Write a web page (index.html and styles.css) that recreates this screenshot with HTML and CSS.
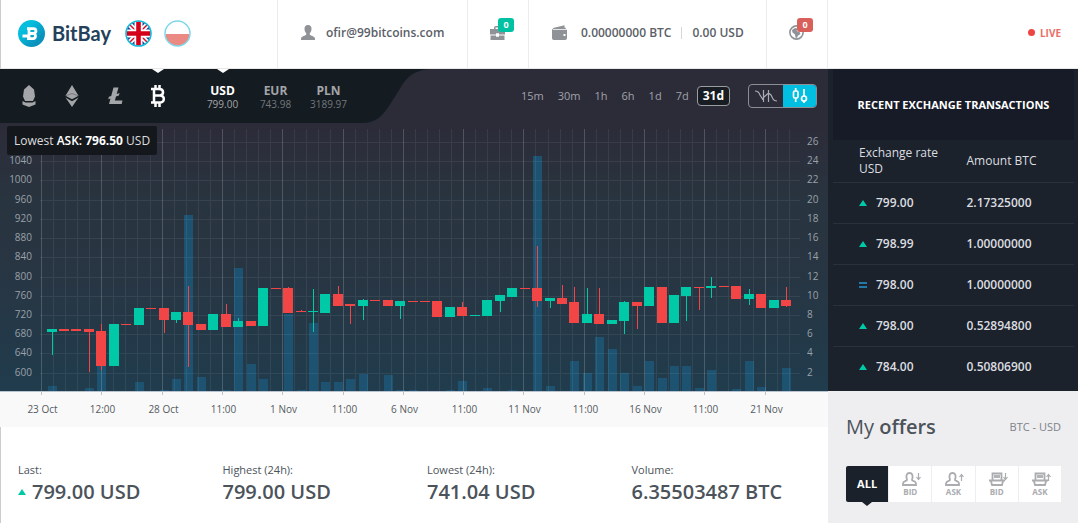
FILE: index.html
```html
<!DOCTYPE html>
<html lang="en">
<head>
<meta charset="utf-8">
<meta name="viewport" content="width=device-width, initial-scale=1">
<title>BitBay</title>
<link rel="stylesheet" href="styles.css">
</head>
<body>
<header class="topbar">
  <div class="brand">
    <a class="logo" href="#">
      <svg width="27" height="27" viewBox="0 0 27 27" aria-hidden="true">
        <defs><linearGradient id="lg" x1="0" y1="0" x2="1" y2="1"><stop offset="0.3" stop-color="#05bede"/><stop offset="0.75" stop-color="#0a92bd"/></linearGradient></defs>
        <circle cx="13.500" cy="13.500" r="13.500" fill="url(#lg)"/>
        <path d="M9 8.600h6.500a2.200 2.200 0 0 1 0 4.900h-5M15.500 13.500a2.700 2.700 0 0 1 0 5.200H9M11 7.500v12M4.500 16h7" fill="none" stroke="#fff" stroke-width="2.800"/>
      </svg>
      <span>BitBay</span>
    </a>
    <button class="flag" type="button" aria-label="English">
      <svg width="27" height="27" viewBox="0 0 27 27">
        <clipPath id="fc"><circle cx="13.500" cy="13.500" r="12"/></clipPath>
        <g clip-path="url(#fc)">
          <path fill="#29418a" d="M0 0h27v27H0z"/>
          <path d="M0 0l27 27M27 0L0 27" stroke="#fff" stroke-width="5"/>
          <path d="M0 0l27 27M27 0L0 27" stroke="#d4102a" stroke-width="1.500"/>
          <path d="M13.500 0v27M0 13.500h27" stroke="#fff" stroke-width="8"/>
          <path d="M13.500 0v27M0 13.500h27" stroke="#d4001a" stroke-width="4.600"/>
        </g>
        <circle cx="13.500" cy="13.500" r="12.500" fill="none" stroke="#19b9da" stroke-width="1.600"/>
      </svg>
    </button>
    <button class="flag" type="button" aria-label="Polski">
      <svg width="27" height="27" viewBox="0 0 27 27">
        <path d="M1.500 14a12 12 0 0 0 24 0z" fill="#ea8a82"/>
        <circle cx="13.500" cy="13.500" r="12.500" fill="none" stroke="#7fd7e8" stroke-width="1.500"/>
      </svg>
    </button>
  </div>
  <a class="cell account" href="#">
    <svg width="14" height="15" viewBox="0 0 14 15" fill="#8f9296" aria-hidden="true"><path d="M7 0c2.500 0 3.700 1.700 3.500 4.200-.1 1.800-.8 3-1.700 3.900v1.700c.4.900 4.700 1.200 5.200 3.700V15H0v-1.500c.5-2.500 4.800-2.800 5.200-3.700V8.100C4.300 7.200 3.600 6 3.500 4.200 3.300 1.700 4.500 0 7 0z"/></svg>
    <span>ofir@99bitcoins.com</span>
  </a>
  <a class="cell orders" href="#" aria-label="Open orders">
    <svg width="15" height="14" viewBox="0 0 15 14" fill="#8f9296" aria-hidden="true"><path d="M4 3V2c0-1.300.6-2 2-2h3c1.400 0 2 .7 2 2v1h4v5.500H9V7.300H6v1.200H0V3zm1.500 0h4V1.500h-4zM.5 9.600h5.500v1.200h3V9.600h5.500V14H.5z"/></svg>
    <span class="badge">0</span>
  </a>
  <a class="cell wallet" href="#">
    <svg width="15" height="15" viewBox="0 0 15 15" fill="#8f9296" aria-hidden="true"><path d="M1 3L12.500.2v2.300l1.300.5V4H1.200z"/><path fill-rule="evenodd" d="M0 3.200c.3 1 1 1.500 2 1.500h13V13c0 1.300-.7 2-2 2H2c-1.400 0-2-.8-2-2zM11.500 9v2h2V9z"/></svg>
    <span>0.00000000 BTC</span><i></i><span>0.00 USD</span>
  </a>
  <a class="cell alerts" href="#" aria-label="Notifications">
    <svg width="15" height="15" viewBox="0 0 15 15" aria-hidden="true"><circle cx="7.500" cy="7.500" r="6.600" fill="none" stroke="#8f9296" stroke-width="1.600"/><path d="M3 5l3-2 3 .5L7.500 6l3 1 1 2-2.500 1.500L8 13l-1.500-.5L6 9.500 3.500 7.500z" fill="#8f9296"/></svg>
    <span class="badge badge-red">0</span>
  </a>
  <div class="live"><b></b>LIVE</div>
</header>

<div class="layout">
  <main class="market">
    <section class="chart">
      <div class="toolbar">
        <nav class="pairs" aria-label="Market">
          <button class="coin" type="button" aria-label="Lisk"><svg width="14" height="22" viewBox="0 0 14 22"><path fill="#a3a5a8" d="M7 0l5 4.500 1 7-2 4.500H3L1 11.500l1-7zM.5 16l3 1.500h7l3-1.500v3.500L7 22 .5 19.500z"/></svg></button>
          <button class="coin" type="button" aria-label="Ethereum"><svg width="14" height="22" viewBox="0 0 14 22"><path fill="#a3a5a8" d="M7 0l6.500 10.800L7 14.300.5 10.800zM.5 12.600L7 16.200l6.500-3.600L7 22z"/><path d="M1 10.700L7 8.500l6 2.200" stroke="#777b80" fill="none"/></svg></button>
          <button class="coin" type="button" aria-label="Litecoin"><svg width="16" height="22" viewBox="0 0 16 22"><path fill="#a3a5a8" d="M6.500 2.500h5L9.700 9l2.800-1-.6 2.400-2.900 1-1.100 4.100h7.600l-.8 3.500H2l1.500-5.600-2.200.8.600-2.400 2.300-.8z"/></svg></button>
          <button class="coin active" type="button" aria-label="Bitcoin"><svg width="16" height="22" viewBox="0 0 16 22"><path d="M1 4h8c5.500 0 5 6 1 6.600M4 4v13.500M4 10.600h6c5.300.5 5 7-.5 7H1M5.500 0v4M9.500 0v4M5.500 17.500V22M9.500 17.500V22" fill="none" stroke="#fff" stroke-width="2.500"/></svg></button>
          <button class="quote active" type="button"><strong>USD</strong><span>799.00</span></button>
          <button class="quote" type="button"><strong>EUR</strong><span>743.98</span></button>
          <button class="quote" type="button"><strong>PLN</strong><span>3189.97</span></button>
        </nav>
        <svg class="tail" width="70" height="54" viewBox="0 0 70 54" aria-hidden="true"><path d="M0 0H70C52 1 46 7 39 18L29 34C21 47 14 54 0 54z" fill="#151c21"/></svg>
        <div class="ranges">
          <button type="button">15m</button><button type="button">30m</button><button type="button">1h</button><button type="button">6h</button><button type="button">1d</button><button type="button">7d</button><button type="button" class="active">31d</button>
        </div>
        <div class="modes">
          <button type="button" aria-label="Line chart"><svg width="22" height="14" viewBox="0 0 22 14" fill="none" stroke="#a9abb2" stroke-width="1.200"><path d="M0 2c3 0 4 1 5 4l2.500 4L9 8l4.500-4L16 6l2 4c1 2 2 2 4 2M8.500 1v12M13.500 1v12"/></svg></button>
          <button type="button" class="active" aria-label="Candlestick chart"><svg width="16" height="16" viewBox="0 0 16 16" fill="none" stroke="#fff" stroke-width="1.700"><rect x="1.500" y="3" width="4.500" height="7" rx="1.500"/><path d="M3.700 0v3M3.700 10v4M12 1v7M12 13v2"/><circle cx="12" cy="10.500" r="2.500"/></svg></button>
        </div>
      </div>
      <svg class="plot" id="plot" viewBox="0 123 828 304" role="img" aria-label="BTC to USD price and volume"></svg>
      <div class="tip">Lowest <b class="tip-side">ASK:</b> <b>796.50</b> USD</div>
    </section>
    <section class="stats">
      <div><h3>Last:</h3><p><i class="up"></i>799.00 USD</p></div>
      <div><h3>Highest (24h):</h3><p>799.00 USD</p></div>
      <div><h3>Lowest (24h):</h3><p>741.04 USD</p></div>
      <div><h3>Volume:</h3><p>6.35503487 BTC</p></div>
    </section>
  </main>

  <aside class="side">
    <section class="recent">
      <h2>RECENT EXCHANGE TRANSACTIONS</h2>
      <table>
        <thead><tr><th>Exchange rate USD</th><th>Amount BTC</th></tr></thead>
        <tbody>
          <tr><td><i class="up"></i>799.00</td><td>2.17325000</td></tr>
          <tr><td><i class="up"></i>798.99</td><td>1.00000000</td></tr>
          <tr><td><i class="same"></i>798.00</td><td>1.00000000</td></tr>
          <tr><td><i class="up"></i>798.00</td><td>0.52894800</td></tr>
          <tr><td><i class="up"></i>784.00</td><td>0.50806900</td></tr>
        </tbody>
      </table>
    </section>
    <section class="offers">
      <div class="offers-head"><h2>My <b>offers</b></h2><span>BTC - USD</span></div>
      <svg class="defs" width="0" height="0" aria-hidden="true">
        <defs>
          <g id="person" fill="none" stroke="#aaacaf" stroke-width="1.800"><path d="M5 8C3.500 3 5 1 7.500 1S11.500 3 10 8c0 1 4 1 4 3.500V13H1v-1.500C1 9 5 9 5 8z"/></g>
          <g id="shop" fill="none" stroke="#aaacaf" stroke-width="1.800"><path d="M3.500 8V1.500h9V8M0 8.500h16M2 9l1 4h10l1-4M6 3v3M8 3v3M10 3v3"/></g>
          <path id="down" d="M16.500 1v6M14.500 5l2 2.500 2-2.500" fill="none" stroke="#aaacaf" stroke-width="1.200"/>
          <path id="rise" d="M16.500 9V2.500M14.500 5l2-2.500 2 2.500" fill="none" stroke="#aaacaf" stroke-width="1.200"/>
        </defs>
      </svg>
      <div class="tabs">
        <button type="button" class="active">ALL</button>
        <button type="button"><svg width="19" height="14" viewBox="0 0 19 14"><use href="#person"/><use href="#down"/></svg>BID</button>
        <button type="button"><svg width="19" height="14" viewBox="0 0 19 14"><use href="#person"/><use href="#rise"/></svg>ASK</button>
        <button type="button"><svg width="19" height="14" viewBox="0 0 19 14"><use href="#shop"/><use href="#down"/></svg>BID</button>
        <button type="button"><svg width="19" height="14" viewBox="0 0 19 14"><use href="#shop"/><use href="#rise"/></svg>ASK</button>
      </div>
    </section>
  </aside>
</div>
<script src="chart.js"></script>
</body>
</html>
```

FILE: styles.css
```css
* { box-sizing: border-box; }
body { margin: 0; min-height: 100vh; display: flex; flex-direction: column; background: #fff; color: #4c535b; font: 12px/16px "Open Sans", "Noto Sans", sans-serif; }
button { margin: 0; padding: 0; border: 0; background: none; color: inherit; font: inherit; cursor: pointer; }
a { color: inherit; text-decoration: none; }
h2, h3, p { margin: 0; }
svg { display: block; flex: none; }

.topbar { display: flex; height: 69px; border-left: 1px solid #ccc; border-bottom: 1px solid #e8e8e8; font-weight: 600; color: #5b6067; }
.brand { display: flex; align-items: center; width: 276px; padding-left: 17px; gap: 12px; padding-bottom: 2px; }
.logo { display: flex; align-items: center; gap: 7px; color: #24415b; font: 700 20px/24px Lato, "Open Sans", sans-serif; }
.logo span { width: 61px; }
.cell { display: flex; align-items: center; position: relative; border-left: 1px solid #ececec; padding-bottom: 3px; }
.account { width: 190px; padding-left: 23px; gap: 11px; }
.orders { width: 61px; padding-left: 22px; }
.wallet { width: 238px; padding-left: 23px; gap: 14px; }
.wallet i { width: 1px; height: 12px; margin: 0 -4px; background: #d3d8da; }
.alerts { width: 62px; padding-left: 22px; border-right: 1px solid #ececec; }
.badge { position: absolute; left: 30px; top: 18px; width: 16px; height: 14px; border-radius: 3px; background: #00c2a2; color: #fff; font: 700 9px/14px "Open Sans", sans-serif; text-align: center; }
.badge-red { background: #d9605a; }
.live { display: flex; align-items: center; gap: 5px; margin-left: auto; padding: 0 17px 3px 0; color: #ea6f68; font-size: 10px; font-weight: 700; }
.live b { width: 7px; height: 7px; border-radius: 50%; background: #ee4444; }

.layout { display: flex; flex: 1; }
.market { flex: 1; min-width: 0; }
.chart { position: relative; background: linear-gradient(#2c2c39 60px, #28343f 130px, #283542 200px, #203c4d 322px, #f9f9f9 322px); }
.toolbar { display: flex; height: 54px; align-items: center; padding-right: 11px; }
.pairs { display: flex; align-items: center; align-self: stretch; width: 362px; padding-left: 7px; background: #151c21; }
.pairs button { position: relative; display: flex; flex-direction: column; align-items: center; justify-content: center; align-self: stretch; }
.pairs .active::before { content: ""; position: absolute; top: 0; border: 6px solid transparent; border-top: 4px solid #fff; border-bottom: 0; }
.coin { width: 43px; }
.quote { width: 53px; color: #73777b; font-size: 10px; line-height: 12px; }
.coin + .quote { margin-left: 17px; }
.quote strong { color: #a3a5a8; font-size: 12px; line-height: 15px; }
.quote.active { color: #a3a5a8; }
.quote.active strong { color: #fff; }
.tail { align-self: stretch; }
.ranges { display: flex; align-items: center; gap: 14px; margin-left: auto; color: #a0a2aa; font-size: 11px; }
.ranges .active { height: 20px; margin-left: -6px; padding: 0 5px; border: 1px solid #9a9ea3; border-radius: 4px; background: #181d24; color: #fff; font-size: 12px; font-weight: 700; }
.modes { display: flex; width: 69px; height: 24px; margin-left: 18px; border: 1px solid #8b8e95; border-radius: 4px; overflow: hidden; }
.modes button { flex: 1; display: grid; place-items: center; }
.modes .active { background: #00bfe0; margin: -1px; }
.plot { width: 100%; height: auto; }
.tip { position: absolute; left: 7px; top: 57px; padding: 0 7px; border-radius: 2px; background: #14181d; color: #ddd; font-size: 12px; line-height: 29px; font-size: 12px; white-space: nowrap; }
.tip b { color: #fff; }
.tip .tip-side { font-weight: 600; }

.axis { font-size: 10px; fill: #99a1aa; }
.dates { font-size: 10px; fill: #565b61; text-anchor: middle; }
.grid { stroke: #fff; stroke-opacity: .07; shape-rendering: crispEdges; fill: none; }
.major { stroke: #fff; stroke-opacity: .18; shape-rendering: crispEdges; fill: none; }
.tick { stroke: #b9c3d0; shape-rendering: crispEdges; fill: none; }
.volume { fill: #1d5371; }
.rise { fill: #00c9a7; }
.fall { fill: #f24545; }

.stats { display: grid; grid-template-columns: repeat(4, 1fr); padding: 35px 0 20px 9px; border-left: 1px solid #ccc; }
.stats div { padding-left: 8px; }
.stats h3 { font-size: 11px; font-weight: 400; }
.stats p { display: flex; align-items: center; gap: 6px; font-size: 20px; line-height: 28px; font-weight: 600; white-space: nowrap; }
.up { display: inline-block; border: 4px solid transparent; border-top: 0; border-bottom: 6px solid #00c9a7; }
.same { display: inline-block; width: 8px; height: 6px; border: solid #2478a8; border-width: 2px 0; }

.side { display: flex; flex-direction: column; width: 250px; background: #eeeef0; }
.recent { padding: 0 4px 4px 5px; background: #1b222b; color: #dcdde0; }
.recent h2 { padding: 1px 0; background: #161b27; color: #fff; font-size: 11px; line-height: 69px; text-align: center; font-weight: 700; }
table { width: 100%; border-collapse: collapse; table-layout: fixed; }
th, td { padding: 0 0 0 26px; font-weight: 400; text-align: left; height: 41px; border-top: 1px solid #2a313a; }
th { height: 42px; border: 0; padding-right: 8px; }
th + th, td + td { padding: 0 0 0 13px; }
td { font-weight: 600; font-size: 12px; }
td i { margin: 0 9px 0 0; vertical-align: 1px; }
.offers { padding: 22px 17px 20px 18px; }
.offers-head { display: flex; align-items: center; justify-content: space-between; color: #7c8288; font-size: 11px; }
.offers h2 { color: #4c535b; font-size: 20px; line-height: 28px; font-weight: 400; }
.offers h2 b { font-weight: 600; }
.defs { position: absolute; }
.tabs { display: grid; grid-template-columns: repeat(5, 1fr); gap: 1px; margin-top: 25px; }
.tabs button { position: relative; display: flex; flex-direction: column; align-items: center; justify-content: center; gap: 1px; height: 36px; background: #fff; color: #aaacaf; font-size: 8px; line-height: 10px; font-weight: 700; }
.tabs svg { margin-left: 3px; }
.tabs .active { border-radius: 2px 0 0 2px; background: #1a212b; color: #fff; font-size: 11px; }
.tabs .active::after { content: ""; position: absolute; top: 36px; border: 5px solid transparent; border-top: 4px solid #1a212b; border-bottom: 0; }
```

FILE: chart.js
```js
// Candle rows: direction, body top, body bottom, wick top, wick bottom, volume top (0 = none)
const candles = [
  [1,329,332,329,355,386],[0,329,331,0,0,0],[0,329,331,0,0,0],[0,329,332,329,372,388],
  [0,331,366,324,370,366],[1,324,366,0,0,0],[0,324,325,0,0,0],[1,308,325,0,0,382],
  [0,308,309,0,0,0],[0,308,320,308,333,390],[1,312,320,312,323,379],[0,312,325,286,367,215],
  [0,324,330,0,0,377],[1,314,330,0,0,0],[0,314,327,304,327,390],[1,321,327,318,327,268],
  [0,321,326,0,0,364],[1,288,326,0,0,379],[0,288,289,0,0,0],[0,288,313,287,313,314],
  [0,311,312,310,312,390],[1,311,312,289,332,323],[1,294,313,0,0,382],[0,294,306,286,306,382],
  [0,304,306,304,324,379],[1,300,306,299,320,374],[0,300,301,0,0,0],[0,300,306,0,0,375],
  [1,301,306,301,319,390],[0,301,302,0,0,390],[0,301,302,0,0,0],[0,301,317,0,0,0],
  [1,307,317,0,0,390],[0,307,316,302,316,381],[1,315,316,0,0,0],[1,300,316,0,0,388],
  [1,295,301,295,312,0],[1,288,297,0,0,390],[0,288,289,0,0,0],[0,288,301,246,307,156],
  [1,298,301,298,308,386],[0,298,304,285,304,0],[0,302,323,287,323,361],[1,314,323,288,323,373],
  [0,314,324,288,324,337],[1,320,324,0,0,349],[1,302,321,301,334,373],[0,302,306,302,329,386],
  [1,287,306,0,0,361],[0,287,323,0,0,378],[1,295,323,0,0,366],[1,287,296,287,321,366],
  [0,287,288,287,310,388],[1,286,288,277,298,370],[0,286,287,0,0,0],[0,286,299,0,0,389],
  [1,294,299,289,305,361],[0,294,308,0,0,387],[1,300,308,0,0,0],[0,300,306,287,307,368]
];
const dates = ["23 Oct","12:00","28 Oct","11:00","1 Nov","11:00","6 Nov","11:00","11 Nov","11:00","16 Nov","11:00","21 Nov"];
const base = 391, left = 41, right = 800;
const box = (x, y, w, h) => `M${x} ${y}h${w}v${h}h${-w}z`;

let minor = "", major = "", ticks = "", volume = "", text = "";
const bodies = ["", ""];

for (let i = 0; i < 63; i++) {
  const x = Math.round(left + i * 12.06) + 0.5;
  if (i % 5) { minor += `M${x} 129V${base}`; continue; }
  major += `M${x} 129V${base}`;
  ticks += `M${x} ${base}v4`;
  text += `<text class="dates" x="${x + 1}" y="413">${dates[i / 5] || ""}</text>`;
}
for (let i = 0; i < 13; i++) {
  const y = Math.round(142 + i * 19.22);
  minor += `M40 ${y + 0.5}H${right}`;
  text += `<text class="axis" x="807" y="${y + 3}">${26 - i * 2}</text>`;
  if (i) text += `<text class="axis" x="32" y="${y + 3}" text-anchor="end">${1080 - i * 40}</text>`;
}
candles.forEach(([up, top, bottom, high, low, vol], i) => {
  const x = Math.round(51.5 + i * 12.45);
  if (vol) volume += box(x - 4, vol, 9, base - vol);
  bodies[up] += box(x - 5, top, 10, bottom - top);
  if (low) bodies[up] += box(x, high, 1, top - high) + box(x, bottom, 1, low - bottom);
});
document.getElementById("plot").innerHTML =
  `<path class="volume" d="${volume}"/><path class="grid" d="${minor}"/><path class="major" d="${major}"/>` +
  `<path class="fall" d="${bodies[0]}"/><path class="rise" d="${bodies[1]}"/>` +
  `<path class="tick" d="${ticks}M0 ${base}.5H828"/>` + text;
```
